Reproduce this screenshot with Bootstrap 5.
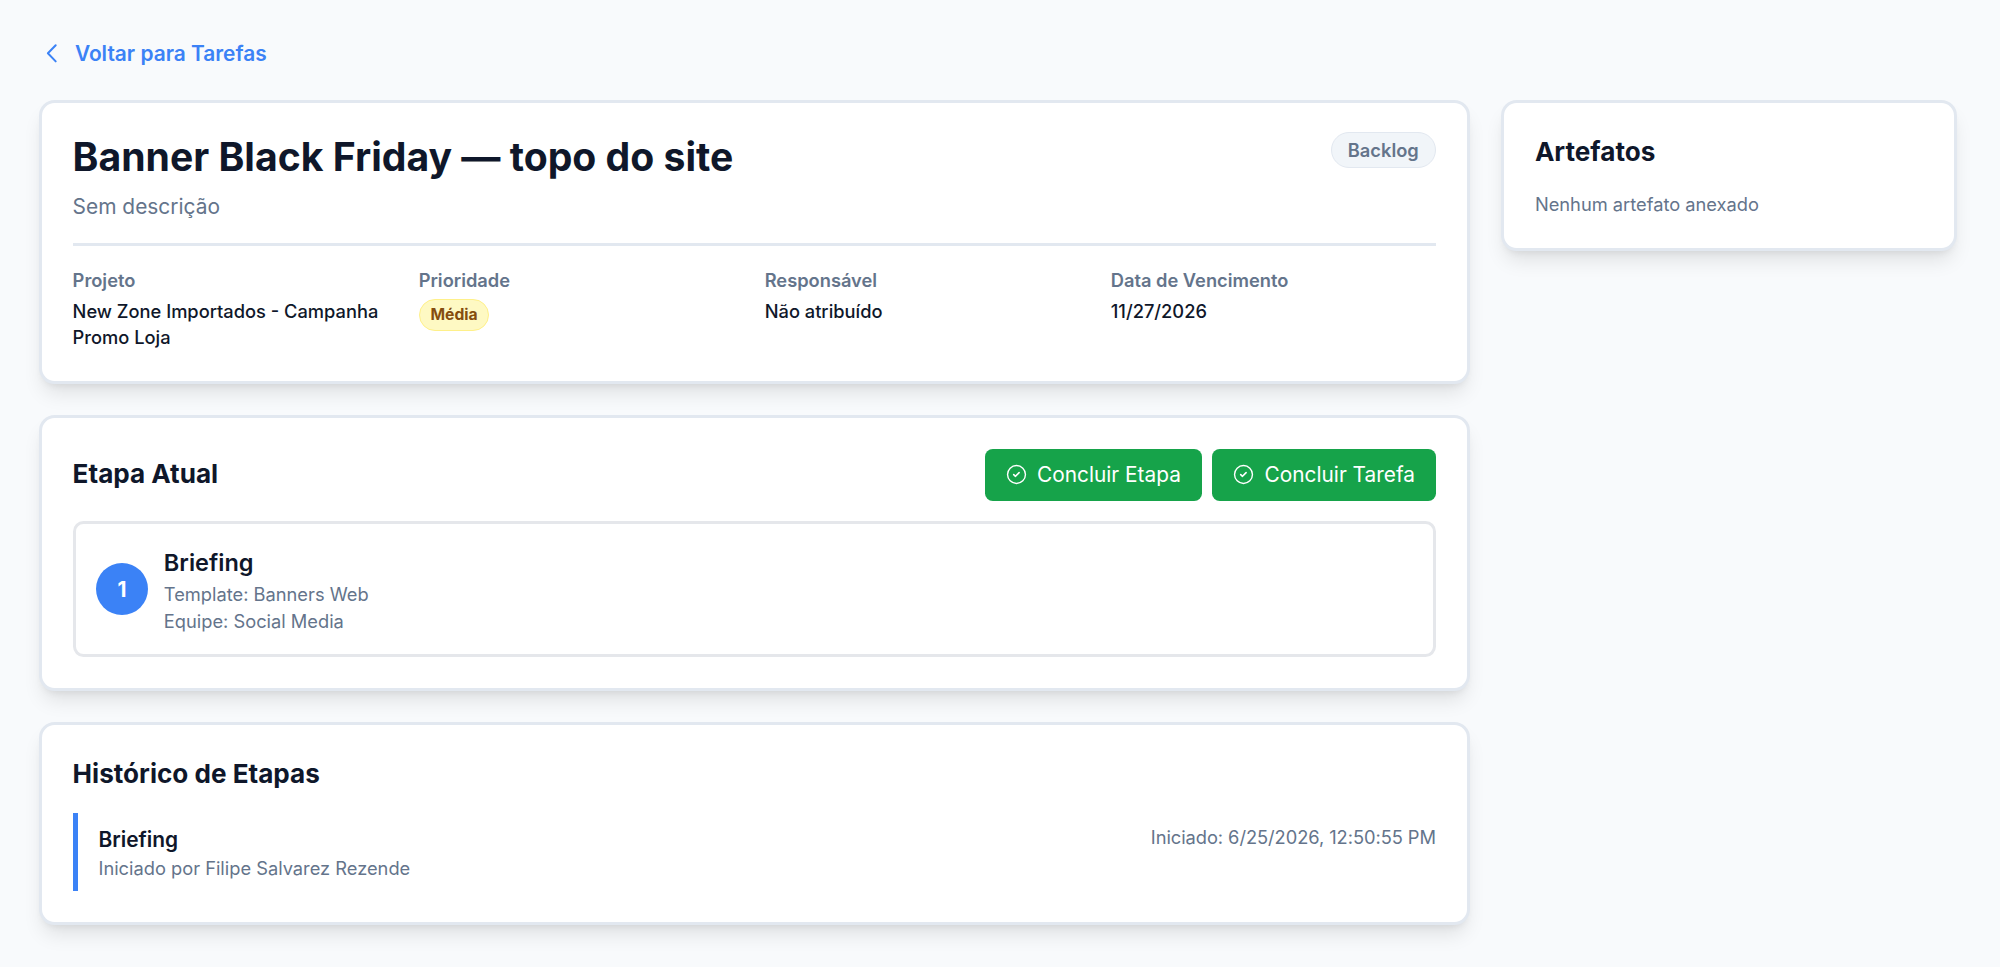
<!DOCTYPE html>
<html lang="pt-BR">
<head>
<meta charset="utf-8">
<meta name="viewport" content="width=device-width, initial-scale=1">
<title>Banner Black Friday</title>
<link href="https://cdn.jsdelivr.net/npm/bootstrap@5.3.0/dist/css/bootstrap.min.css" rel="stylesheet">
<style>
:root { font-size: 20.9px; }
body { background: #f8fafc; color: #0f172a; font-family: Inter, "Liberation Sans", sans-serif; font-size: 1rem; line-height: 1.5; }
.page { padding: 38px 43px 40px 39px; }
.back-link { color: #3b82f6; height: 31px; margin-bottom: 31px; margin-left: -.4px; }
.layout { display: grid; grid-template-columns: 1430.5px 1fr; gap: 31.8px; align-items: start; }
.stack { display: grid; gap: 31.4px; }
.panel { background: #fff; border: 3px solid #e2e8f0; border-radius: 15.7px; padding: 30.6px; box-shadow: 0 13px 20px -4px rgba(0,0,0,.1), 0 5px 8px -5px rgba(0,0,0,.1); }
h1 { font-size: 39.15px; line-height: 46.2px; margin-bottom: 11.2px; }
h2 { font-size: 26.1px; line-height: 36.6px; margin-bottom: 20.9px; }
.muted { color: #64748b; }
.sm-text { font-size: 18.28px; line-height: 26.15px; }
.event-date { letter-spacing: -.05px; }
.meta { border-top: 3px solid #e2e8f0; margin-top: 20.6px; padding-top: 20.6px; display: grid; grid-template-columns: repeat(4, 1fr); gap: 20.9px; }
.meta dt { margin-bottom: 5.1px; }
.pill { border: 1px solid; border-radius: 99px; display: inline-flex; align-items: center; white-space: nowrap; }
.pill-status { margin-top: -1.3px; height: 36px; padding: 0 16.2px; background: #f1f5f9; border-color: #e2e8f0; color: #64748b; }
.pill-priority { margin-top: .8px; height: 32.6px; padding: 0 10.8px; background: #fef9c3; border-color: #fef08a; color: #854d0e; font-size: 15.7px; }
.btn-done { --bs-btn-color: #fff; --bs-btn-bg: #16a34a; height: 52.2px; padding: 0 20.9px; border: 0; border-radius: 7.8px; font-size: 20.85px; }
.step { border: 3px solid #e5e7eb; border-radius: 10.4px; padding: 20.4px; margin-top: 20.5px; gap: 15.7px; }
.step-num { width: 52.2px; height: 52.2px; background: #3b82f6; }
.step-name { font-size: 23.5px; line-height: 36.6px; }
.event { border-left: 5px solid #3b82f6; padding: 10.4px 0 10.4px 20.9px; }
.back-icon { margin-right: 12.3px; }
</style>
</head>
<body>
<main class="page">
  <a href="#" class="back-link d-flex align-items-center fw-semibold text-decoration-none">
    <svg class="back-icon" width="24" height="24" viewBox="0 0 24 24" fill="none" stroke="currentColor" stroke-width="2" stroke-linecap="round" stroke-linejoin="round"><path d="M16.7 3.2 8.9 11.3l7.8 8.1"/></svg>
    Voltar para Tarefas
  </a>
  <div class="layout">
    <div class="stack">
      <section class="panel">
        <div class="d-flex justify-content-between align-items-start">
          <div>
            <h1 class="fw-bold">Banner Black Friday — topo do site</h1>
            <p class="muted mb-0">Sem descrição</p>
          </div>
          <span class="pill pill-status sm-text fw-semibold">Backlog</span>
        </div>
        <dl class="meta sm-text mb-0">
          <div><dt class="muted fw-semibold">Projeto</dt><dd class="mb-0 fw-medium">New Zone Importados - Campanha Promo Loja</dd></div>
          <div><dt class="muted fw-semibold">Prioridade</dt><dd class="mb-0 d-flex"><span class="pill pill-priority fw-bold">Média</span></dd></div>
          <div><dt class="muted fw-semibold">Responsável</dt><dd class="mb-0 fw-medium">Não atribuído</dd></div>
          <div><dt class="muted fw-semibold">Data de Vencimento</dt><dd class="mb-0 fw-medium">11/27/2026</dd></div>
        </dl>
      </section>
      <section class="panel">
        <div class="d-flex justify-content-between align-items-center">
          <h2 class="fw-bold mb-0">Etapa Atual</h2>
          <div class="d-flex gap-2">
            <button class="btn btn-done d-flex align-items-center gap-2"><svg width="21" height="21" viewBox="0 0 21 21" fill="none" stroke="currentColor" stroke-width="1.4" stroke-linecap="round" stroke-linejoin="round"><circle cx="10.5" cy="10.5" r="8.95"/><path stroke-width="1.6" d="m7.7 10.6 1.8 1.7 3.6-3.7"/></svg>Concluir Etapa</button>
            <button class="btn btn-done d-flex align-items-center gap-2"><svg width="21" height="21" viewBox="0 0 21 21" fill="none" stroke="currentColor" stroke-width="1.4" stroke-linecap="round" stroke-linejoin="round"><circle cx="10.5" cy="10.5" r="8.95"/><path stroke-width="1.6" d="m7.7 10.6 1.8 1.7 3.6-3.7"/></svg>Concluir Tarefa</button>
          </div>
        </div>
        <div class="step d-flex align-items-center">
          <div class="step-num rounded-circle text-white fw-bold d-flex align-items-center justify-content-center">1</div>
          <div>
            <h3 class="step-name fw-semibold mb-0">Briefing</h3>
            <div class="muted sm-text">Template: Banners Web</div>
            <div class="muted sm-text">Equipe: Social Media</div>
          </div>
        </div>
      </section>
      <section class="panel">
        <h2 class="fw-bold">Histórico de Etapas</h2>
        <div class="event d-flex justify-content-between align-items-start">
          <div>
            <div class="fw-semibold">Briefing</div>
            <div class="muted sm-text">Iniciado por Filipe Salvarez Rezende</div>
          </div>
          <div class="muted sm-text event-date">Iniciado: 6/25/2026, 12:50:55 PM</div>
        </div>
      </section>
    </div>
    <aside class="panel">
      <h2 class="fw-bold">Artefatos</h2>
      <p class="muted sm-text mb-0">Nenhum artefato anexado</p>
    </aside>
  </div>
</main>
<script src="https://cdn.jsdelivr.net/npm/bootstrap@5.3.0/dist/js/bootstrap.bundle.min.js"></script>
</body>
</html>
